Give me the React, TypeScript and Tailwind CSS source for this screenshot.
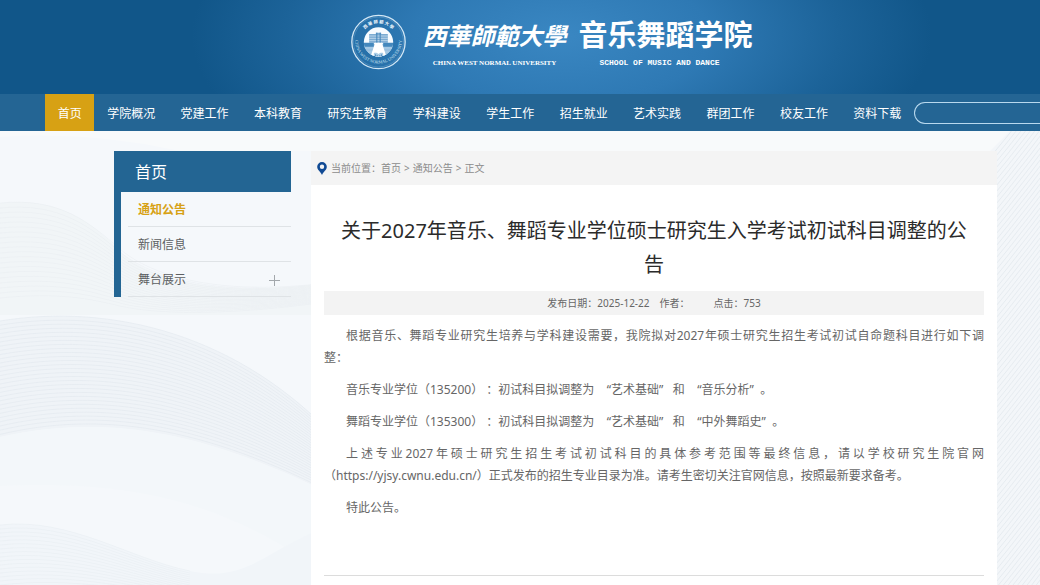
import React from "react"

type MenuItem = { label: string; active?: boolean; expandable?: boolean }

const NAV_ITEMS = [
	"首页",
	"学院概况",
	"党建工作",
	"本科教育",
	"研究生教育",
	"学科建设",
	"学生工作",
	"招生就业",
	"艺术实践",
	"群团工作",
	"校友工作",
	"资料下载",
]

const SIDE_ITEMS: MenuItem[] = [
	{ label: "通知公告", active: true },
	{ label: "新闻信息" },
	{ label: "舞台展示", expandable: true },
]

const range = (n: number) => Array.from({ length: n }, (_, i) => i)

function Emblem() {
	return (
		<svg viewBox="0 0 164 168" className="h-14 w-[55px] shrink-0" role="img" aria-label="西华师范大学校徽">
			<defs>
				<path id="ring-top" d="M 26 84 A 56 56 0 0 1 138 84" />
				<path id="ring-bottom" d="M 14 62 A 70 70 0 1 0 150 62" />
				<clipPath id="disc">
					<circle cx="82" cy="84" r="44" />
				</clipPath>
			</defs>
			<circle cx="82" cy="84" r="80" fill="none" stroke="#d3e7f5" strokeWidth="4" />
			<circle cx="82" cy="84" r="75" fill="none" stroke="#8fbcdd" strokeWidth="1" />
			<g clipPath="url(#disc)">
				<rect x="30" y="30" width="110" height="110" fill="#f6fbff" />
				<path d="M34 90h96v50H34z" fill="#7fb0d6" />
				{range(12).map((i) => (
					<path key={i} d={`M34 ${92 + i * 4}h96`} stroke="#d4e7f5" strokeWidth="1.6" />
				))}
				<path d="M54 60h20v-4h16v4h20v26H54z" fill="#7aabd2" />
				<path d="M54 66h56M54 73h56M54 80h56" stroke="#d9eaf6" strokeWidth="2" />
				<path d="M77 56v32M87 56v32" stroke="#3f83b9" strokeWidth="3" />
				<path d="M38 86h30v12H38zM96 86h30v12H96z" fill="#4488bd" />
				<path d="M72 86h20l18 54H54z" fill="#fff" />
				<path d="M68 117c6-2 10 0 14 3 4-3 8-5 14-3v13H68z" fill="#a9cce6" />
				<path d="M73 128v-7M78 128v-5M86 128v-5M91 128v-7" stroke="#2d73ad" strokeWidth="2" />
			</g>
			<text fill="#f1f8fd" fontSize="13" className="font-['Noto_Sans_CJK_SC',sans-serif] font-bold">
				<textPath href="#ring-top" startOffset="50%" textAnchor="middle">
					西 華 師 範 大 學
				</textPath>
			</text>
			<text fill="#d3e7f5" fontSize="13" className="font-['Liberation_Serif',serif]">
				<textPath href="#ring-bottom" startOffset="50%" textAnchor="middle">
					CHINA WEST NORMAL UNIVERSITY
				</textPath>
			</text>
		</svg>
	)
}

// Pale guilloche waves behind the page content
function Backdrop() {
	return (
		<svg
			viewBox="0 0 1040 454"
			preserveAspectRatio="xMidYMin slice"
			className="absolute inset-0 -z-10 h-full w-full"
			fill="none"
			aria-hidden="true"
		>
			<rect width="1040" height="454" fill="#f5f8fb" />
			<path d="M0 0H1040V20H180Q90 0 0 6Z" fill="#f8fafb" />
			<path d="M0 72C60 66 90 90 120 120S220 168 340 150V184H0Z" fill="#f1f5f7" />
			<path d="M0 190C110 172 240 202 340 312V368C200 296 100 284 0 306Z" fill="#eff3f7" />
			<path d="M0 306C100 284 200 296 340 368V454C240 378 150 348 0 355Z" fill="#f3f7fa" />
			<path d="M0 394C70 386 130 428 190 440S260 420 340 390V454H0Z" fill="#f1f5f9" />
			<g stroke="#e8edf1" strokeWidth="0.5">
				{range(20).map((i) => (
					<path key={i} d={`M0 ${72 + i * 5}C60 ${66 + i * 5} 90 ${92 + i * 4} 120 ${118 + i * 3}S220 ${168 + i} 340 ${150 + i}`} />
				))}
			</g>
			<g stroke="#e4eaef" strokeWidth="0.7">
				{range(28).map((i) => (
					<path key={i} d={`M0 ${190 + i * 4.2}C${110 - i * 0.4} ${172 + i * 4} ${240 - i * 1.4} ${202 + i * 3.4} 340 ${312 + i * 2}`} />
				))}
			</g>
			<g stroke="#e7edf1" strokeWidth="0.5">
				{range(18).map((i) => (
					<path key={i} d={`M0 ${394 + i * 4}C70 ${386 + i * 4} 130 ${428 + i * 2} 190 ${440 + i * 2}`} />
				))}
			</g>
			<path d="M1010 0H1040V454H970V40Z" fill="#f3f6f9" />
			<g stroke="#e2e8ed" strokeWidth="0.8">
				{range(90).map((i) => (
					<path key={i} d={`M970 ${50 + i * 6}Q1005 ${10 + i * 6} 1050 ${i * 6 - 50}`} />
				))}
			</g>
		</svg>
	)
}

function SiteHeader() {
	return (
		<header className="bg-[#115689] bg-[radial-gradient(ellipse_370px_170px_at_54%_36px,#3a87c2_0%,#2e79b4_40%,#1c6399_75%,#115689_100%)] text-white">
			<div className="flex h-[94px] items-start justify-center gap-4 pt-[14px] pl-16">
				<Emblem />
				<div className="flex gap-3">
					<div className="flex flex-col items-center">
						<span className="h-[42px] font-['Noto_Sans_CJK_TC','Noto_Sans_CJK_SC',sans-serif] text-[24px] leading-[42px] font-bold italic">
							西華師範大學
						</span>
						<span className="font-['Liberation_Serif',serif] text-[7px] leading-[14px] font-bold">CHINA WEST NORMAL UNIVERSITY</span>
					</div>
					<div className="flex flex-col items-center">
						<span className="h-[42px] text-[29px] leading-[42px] font-bold">音乐舞蹈学院</span>
						<span className="pr-3 font-['Liberation_Mono',monospace] text-[8px] leading-[14px] font-bold">SCHOOL OF MUSIC AND DANCE</span>
					</div>
				</div>
			</div>
			<nav className="flex h-[37px] items-center bg-[#246594] pl-[45px]" aria-label="主导航">
				<ul className="flex h-full w-[869px] shrink-0">
					{NAV_ITEMS.map((label, i) => (
						<li key={label} className="flex-auto">
							<a
								href="#"
								className={`flex h-full items-center justify-center px-3 pt-0.5 text-[12px] whitespace-nowrap ${i === 0 ? "bg-[#d7a114]" : ""}`}
							>
								{label}
							</a>
						</li>
					))}
				</ul>
				<input
					type="search"
					aria-label="站内搜索"
					className="h-[22px] min-w-0 flex-1 rounded-l-full border border-r-0 border-[#b9d9ee] bg-transparent px-3 text-[12px] outline-none"
				/>
			</nav>
		</header>
	)
}

function SideMenu() {
	return (
		<aside className="w-[177px] shrink-0 self-start border-l-[7px] border-[#236593]">
			<h2 className="flex h-[41px] items-center bg-[#236593] pl-[14px] text-[16px] text-white">首页</h2>
			<ul className="pl-[7px]">
				{SIDE_ITEMS.map((item) => (
					<li key={item.label} className="flex h-[35px] items-center justify-between border-b border-[#dfe3e6] pt-0.5 pr-[11px] pl-[10px]">
						<a href="#" className={`text-[12px] ${item.active ? "font-bold text-[#d7a114]" : "text-[#5c5f62]"}`}>
							{item.label}
						</a>
						{item.expandable && (
							<button type="button" aria-label={`展开${item.label}`}>
								<svg viewBox="0 0 11 11" className="h-[11px] w-[11px]" stroke="#a3a8ac" strokeWidth="1">
									<path d="M0 5.5h11M5.5 0v11" />
								</svg>
							</button>
						)}
					</li>
				))}
			</ul>
		</aside>
	)
}

function Breadcrumb() {
	return (
		<div className="flex h-[34px] items-center bg-[#f4f4f4] pl-[6px] text-[10px] text-[#8c8c8c]">
			<svg viewBox="0 0 10 13" className="mr-1 h-[13px] w-[10px]" aria-hidden="true">
				<path fillRule="evenodd" d="M5 0a4.8 4.8 0 0 0-4.8 4.8C.2 8 3.6 9.7 5 13c1.4-3.3 4.8-5 4.8-8.2A4.8 4.8 0 0 0 5 0Zm0 2.6a2.2 2.2 0 1 1 0 4.400 2.200 2.200 0 0 1 0-4.400Z" fill="#114a94" />
			</svg>
			<span>当前位置：</span>
			<div className="flex gap-[3px]">
				<a href="#">首页</a>
				<span>&gt;</span>
				<a href="#">通知公告</a>
				<span>&gt;</span>
				<span>正文</span>
			</div>
		</div>
	)
}

function Article() {
	return (
		<article className="bg-white px-[13px] pt-[29px] pb-2">
			<h1 className="text-center text-[20px] leading-[34px] text-[#2b2b2b]">
				关于2027年音乐、舞蹈专业学位硕士研究生入学考试初试科目调整的公
				<br />告
			</h1>
			<div className="mt-[9px] flex h-6 items-center justify-center bg-[#f3f3f3] text-[10px] text-[#666]">
				<span className="mr-[10px]">发布日期：2025-12-22</span>
				<span className="mr-6">作者：</span>
				<span>点击：753</span>
			</div>
			<div className="mt-[10px] flex flex-col gap-[10px] border-b border-[#dcdcdc] pb-14 text-[12px] leading-[22px] text-[#666]">
				<p>
					<span className="block pl-[22px] [text-align-last:justify]">
						根据音乐、舞蹈专业研究生培养与学科建设需要，我院拟对2027年硕士研究生招生考试初试自命题科目进行如下调
					</span>
					整：
				</p>
				<p className="pl-[22px] whitespace-pre-wrap">音乐专业学位（135200） ：初试科目拟调整为{"    "}“艺术基础”{"   "}和{"    "}“音乐分析”{"  "}。</p>
				<p className="pl-[22px] whitespace-pre-wrap">舞蹈专业学位（135300） ：初试科目拟调整为{"    "}“艺术基础”{"   "}和{"    "}“中外舞蹈史”{"  "}。</p>
				<p>
					<span className="block pl-[22px] [text-align-last:justify]">
						上述专业2027年硕士研究生招生考试初试科目的具体参考范围等最终信息，请以学校研究生院官网
					</span>
					（https://yjsy.cwnu.edu.cn/）正式发布的招生专业目录为准。请考生密切关注官网信息，按照最新要求备考。
				</p>
				<p className="pl-[22px]">特此公告。</p>
			</div>
		</article>
	)
}

export default function App() {
	return (
		<div lang="zh-CN" className="flex min-h-screen flex-col overflow-x-hidden font-['Noto_Sans','Noto_Sans_CJK_SC',sans-serif]">
			<SiteHeader />
			<main className="relative isolate flex flex-1 gap-5 pt-5 pr-[43px] pl-[114px]">
				<Backdrop />
				<SideMenu />
				<section className="min-w-0 flex-1 bg-white">
					<Breadcrumb />
					<Article />
				</section>
			</main>
		</div>
	)
}
